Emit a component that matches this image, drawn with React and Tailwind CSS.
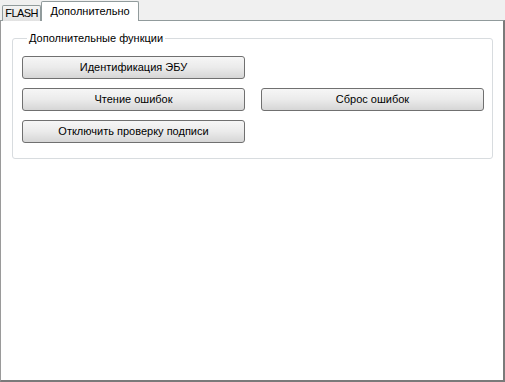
import React from "react";

function Btn({ children }) {
  return (
    <button className="w-[223px] h-[23px] rounded-[3px] border border-[#707070] bg-gradient-to-b from-[#f6f6f6] via-[#ebebeb] to-[#d6d6d6] text-[11px] text-black leading-none flex items-center justify-center">
      {children}
    </button>
  );
}

export default function App() {
  return (
    <div
      className="w-[505px] h-[382px] bg-[#f0f0f0] flex flex-col"
      style={{ fontFamily: '"Liberation Sans", Arial, sans-serif' }}
    >
      <div className="h-[20px] flex items-end pl-[2px] relative z-10">
        <div className="w-[39px] h-[16px] -mb-px border border-[#919b9c] border-b-0 rounded-t-[2px] bg-gradient-to-b from-[#f4f4f4] to-[#e2e2e2] flex items-center justify-center text-[11px] tracking-[-0.6px] text-black">
          FLASH
        </div>
        <div className="w-[98px] h-[20px] -mb-px border border-[#919b9c] border-b-0 rounded-t-[2px] bg-white flex items-center justify-center text-[11px] text-black">
          Дополнительно
        </div>
      </div>
      <div className="flex-1 bg-white border-t border-t-[#919b9c] border-l border-l-[#9a9a9a] border-r-2 border-r-[#7a7a7a] border-b-2 border-b-[#7a7a7a] pt-[11px] pl-[11px] pr-[10px]">
        <fieldset className="border border-[#d8dcdf] rounded-[3px] pl-[9px] pr-[8px] pt-[11px] pb-[15px]">
          <legend className="ml-[5px] px-[2px] text-[11px] text-black leading-[13px]">
            Дополнительные функции
          </legend>
          <div className="grid grid-cols-[223px_223px] gap-x-[16px] gap-y-[9px]">
            <Btn>Идентификация ЭБУ</Btn>
            <div />
            <Btn>Чтение ошибок</Btn>
            <Btn>Сброс ошибок</Btn>
            <Btn>Отключить проверку подписи</Btn>
          </div>
        </fieldset>
      </div>
    </div>
  );
}
